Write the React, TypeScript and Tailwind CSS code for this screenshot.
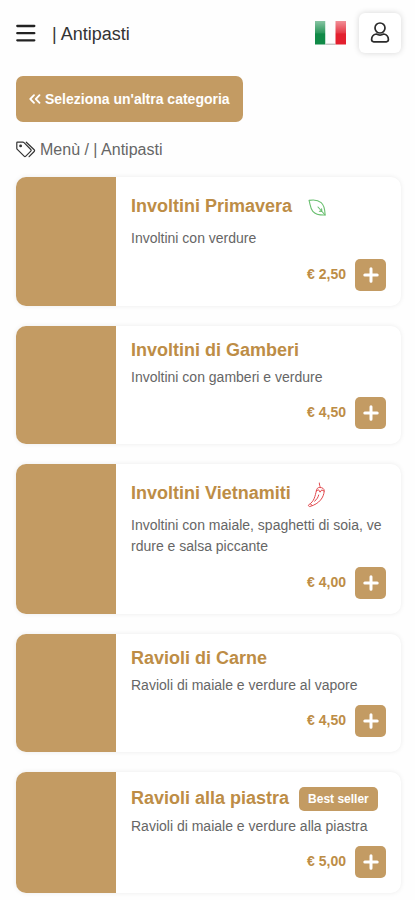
import React from 'react';

type Tag = 'veg' | 'spicy' | 'best';

interface Dish {
  name: string;
  description: string;
  price: string;
  tag?: Tag;
}

const dishes: Dish[] = [
  { name: 'Involtini Primavera', description: 'Involtini con verdure', price: '2,50', tag: 'veg' },
  { name: 'Involtini di Gamberi', description: 'Involtini con gamberi e verdure', price: '4,50' },
  { name: 'Involtini Vietnamiti', description: 'Involtini con maiale, spaghetti di soia, verdure e salsa piccante', price: '4,00', tag: 'spicy' },
  { name: 'Ravioli di Carne', description: 'Ravioli di maiale e verdure al vapore', price: '4,50' },
  { name: 'Ravioli alla piastra', description: 'Ravioli di maiale e verdure alla piastra', price: '5,00', tag: 'best' },
];

const titleHeight = (tag?: Tag) => {
  if (tag === 'veg' || tag === 'spicy') return 'h-[31px]';
  if (tag === 'best') return 'h-[23.5px]';
  return 'h-[21px]';
};

function MenuIcon() {
  return (
    <svg width="20" height="18" viewBox="0 0 20 18" stroke="#222" strokeWidth="2.3" strokeLinecap="round">
      <path d="M1.3 2h17M1.3 9.2h17M1.3 16.3h17" />
    </svg>
  );
}

function ItalianFlag() {
  return (
    <svg width="31" height="24" viewBox="0 0 31 24">
      <defs>
        <linearGradient id="gloss" x1="0" y1="0" x2="0" y2="1">
          <stop offset="0" stopColor="#fff" stopOpacity="0.5" />
          <stop offset="0.5" stopColor="#fff" stopOpacity="0.12" />
          <stop offset="0.55" stopColor="#fff" stopOpacity="0" />
        </linearGradient>
      </defs>
      <rect width="10.5" height="23.5" fill="#108a47" />
      <rect x="10.5" width="10" height="23.5" fill="#fdfdfd" />
      <rect x="20.5" width="10.5" height="23.5" fill="#e3202f" />
      <rect width="31" height="23.5" fill="url(#gloss)" />
      <path d="M10.5 23.2h10" stroke="#999" strokeWidth="0.8" />
    </svg>
  );
}

function UserIcon() {
  return (
    <svg width="20" height="22" viewBox="0 0 20 22" fill="none" stroke="#2b2b2b" strokeWidth="1.7">
      <circle cx="10" cy="6" r="5" />
      <path d="M6.300 12C3.300 12.600 1.600 14.800 1.600 17.600c0 1.400.8 2.200 2.100 2.200h12.600c1.300 0 2.100-.8 2.100-2.200 0-2.800-1.700-5-4.700-5.600-2.300 1.300-5.100 1.300-7.400 0z" strokeLinejoin="round" />
    </svg>
  );
}

function ChevronsIcon() {
  return (
    <svg width="12" height="10" viewBox="0 0 12 10" fill="none" stroke="#fff" strokeWidth="1.8" strokeLinecap="round" strokeLinejoin="round">
      <path d="M5 1.200L1.300 5 5 8.800M10.500 1.200L6.800 5l3.700 3.800" />
    </svg>
  );
}

function TagsIcon() {
  return (
    <svg width="20" height="17" viewBox="0 0 20 17" fill="none" stroke="#333" strokeWidth="1.2" strokeLinejoin="round" strokeLinecap="round">
      <path d="M.8 1.800v5.400c0 .5.2.9.500 1.200l6.800 6.800c.5.5 1.200.5 1.700 0l5-5c.5-.5.5-1.200 0-1.700L8 1.700C7.700 1.400 7.300 1.200 6.800 1.200H1.400c-.3 0-.6.300-.6.600z" />
      <path d="M10.300 1.200l7.900 7.600c.5.5.5 1.200 0 1.700l-5.100 5.200" />
      <circle cx="4.600" cy="4.900" r="0.800" fill="#333" />
    </svg>
  );
}

function LeafIcon() {
  return (
    <svg width="19" height="18" viewBox="0 0 19 18" fill="none" stroke="#6abf70" strokeWidth="1.1" strokeLinecap="round" strokeLinejoin="round">
      <path d="M1 1.400C5.500.5 10 .9 13.200 3.600c3.700 3.200 3.600 7.400 3.900 12.400-4.800.2-9.300-.3-12.300-3.700C2 9 2.300 5.200 1 1.400z" />
      <path d="M10 8l7.100 8M13.800 12.200l-.2-2.400M13.800 12.400l-2.400-.2" />
    </svg>
  );
}

function ChiliIcon() {
  return (
    <svg width="19" height="26" viewBox="0 0 19 26" fill="none" stroke="#e0484d" strokeWidth="1" strokeLinecap="round" strokeLinejoin="round">
      <path d="M12.300 1c-.3 1.600 1 2.800.8 4.600" />
      <path d="M9.400 8.700c.2-2.200 1.400-3.300 3.300-3.200 2.500-.1 4.700 1.100 4.500 3.600-.4 6.200-4.600 12.600-14.300 15.400-.9.300-2-.9-1.200-1.700 5.800-3.600 6.200-8.400 7.700-14.100z" />
      <path d="M9.400 8.700l2.200-.9 1.500 2.400 1.600-2.300 2.400 1.200M7.600 19.200c2.300-1.800 3.600-4 4.100-6.200M3.400 22l1.600 1.200" />
    </svg>
  );
}

function DishTag({ tag }: { tag: Tag }) {
  if (tag === 'veg') return <span className="ml-4"><LeafIcon /></span>;
  if (tag === 'spicy') return <span className="ml-4"><ChiliIcon /></span>;
  return (
    <span className="ml-2.5 flex h-[23.5px] items-center rounded-[5px] bg-[#c39b63] px-[9px] text-xs font-bold text-white">
      Best seller
    </span>
  );
}

function DishCard({ dish }: { dish: Dish }) {
  return (
    <article className="flex overflow-hidden rounded-[10px] bg-white shadow-[0_0_5px_rgba(0,0,0,0.08)]">
      <div className="w-[100px] shrink-0 bg-[#c39b63]" />
      <div className="min-w-0 flex-1 p-[15px]">
        <div className={`flex items-center ${titleHeight(dish.tag)}`}>
          <h2 className="whitespace-nowrap pb-0.5 text-lg/[21px] font-bold text-[#bd8d46]">{dish.name}</h2>
          {dish.tag && <DishTag tag={dish.tag} />}
        </div>
        <p className="mt-[5px] break-all text-sm/[21px] text-[#666]">{dish.description}</p>
        <div className="mt-[9.5px] flex items-center justify-end gap-[9px]">
          <span className="pb-0.5 text-sm font-bold text-[#bd8d46]">€ {dish.price}</span>
          <button className="flex h-8 w-[31px] items-center justify-center rounded-[5px] bg-[#c39b63]" aria-label="Aggiungi">
            <svg width="16" height="16" viewBox="0 0 16 16" stroke="#fff" strokeWidth="3" strokeLinecap="round">
              <path d="M8 1.800v12.400M1.800 8h12.400" />
            </svg>
          </button>
        </div>
      </div>
    </article>
  );
}

export default function App() {
  return (
    <div className="h-[900px] w-[415px] overflow-hidden bg-[#fefefe] pl-4 pr-[14px] font-['Liberation_Sans',Arial,sans-serif]">
      {/* Header */}
      <header className="flex h-[66px] items-center">
        <MenuIcon />
        <h1 className="ml-4 pt-0.5 text-lg text-[#333]">| Antipasti</h1>
        <div className="ml-auto flex items-center gap-[13px]">
          <ItalianFlag />
          <button className="flex h-10 w-[42px] items-center justify-center rounded-md bg-white shadow-[0_0_6px_rgba(0,0,0,0.16)]" aria-label="Profilo">
            <UserIcon />
          </button>
        </div>
      </header>

      <button className="mt-2.5 flex h-[46px] w-[227px] items-center gap-1 rounded-[7px] bg-[#c39b63] pl-[13px] text-sm font-bold text-white">
        <ChevronsIcon />
        <span className="whitespace-nowrap">Seleziona un'altra categoria</span>
      </button>

      {/* Breadcrumb */}
      <nav className="mt-[15px] flex h-6 items-center gap-1 text-base text-[#666]">
        <TagsIcon />
        <span className="pt-0.5">Menù / | Antipasti</span>
      </nav>

      <main className="mt-[16.400px] flex flex-col gap-5">
        {dishes.map(dish => (
          <DishCard key={dish.name} dish={dish} />
        ))}
      </main>
    </div>
  );
}
